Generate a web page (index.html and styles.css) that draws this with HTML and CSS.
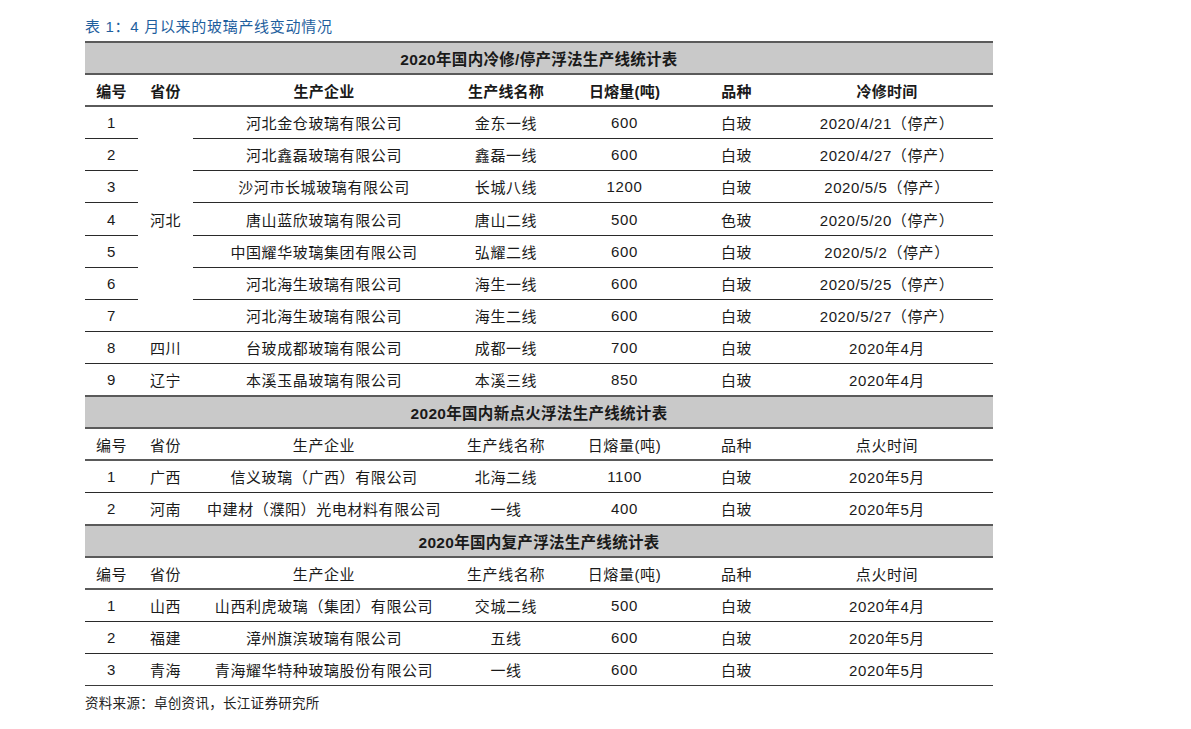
FILE: index.html
```html
<!DOCTYPE html>
<html lang="zh">
<head>
<meta charset="utf-8">
<link rel="stylesheet" href="styles.css">
</head>
<body>
<div class="wrap">
  <div class="title">表 1：4 月以来的玻璃产线变动情况</div>
  <table class="tbl">
    <colgroup>
      <col class="c1"><col class="c2"><col class="c3"><col class="c4"><col class="c5"><col class="c6"><col class="c7">
    </colgroup>
    <tbody>
      <tr class="band"><td colspan="7">2020年国内冷修/停产浮法生产线统计表</td></tr>
      <tr class="head bold"><td>编号</td><td>省份</td><td>生产企业</td><td>生产线名称</td><td>日熔量(吨)</td><td>品种</td><td>冷修时间</td></tr>
      <tr><td>1</td><td rowspan="7" class="merged">河北</td><td>河北金仓玻璃有限公司</td><td>金东一线</td><td>600</td><td>白玻</td><td>2020/4/21（停产）</td></tr>
      <tr><td>2</td><td>河北鑫磊玻璃有限公司</td><td>鑫磊一线</td><td>600</td><td>白玻</td><td>2020/4/27（停产）</td></tr>
      <tr><td>3</td><td>沙河市长城玻璃有限公司</td><td>长城八线</td><td>1200</td><td>白玻</td><td>2020/5/5（停产）</td></tr>
      <tr><td>4</td><td>唐山蓝欣玻璃有限公司</td><td>唐山二线</td><td>500</td><td>色玻</td><td>2020/5/20（停产）</td></tr>
      <tr><td>5</td><td>中国耀华玻璃集团有限公司</td><td>弘耀二线</td><td>600</td><td>白玻</td><td>2020/5/2（停产）</td></tr>
      <tr><td>6</td><td>河北海生玻璃有限公司</td><td>海生一线</td><td>600</td><td>白玻</td><td>2020/5/25（停产）</td></tr>
      <tr><td>7</td><td>河北海生玻璃有限公司</td><td>海生二线</td><td>600</td><td>白玻</td><td>2020/5/27（停产）</td></tr>
      <tr><td>8</td><td>四川</td><td>台玻成都玻璃有限公司</td><td>成都一线</td><td>700</td><td>白玻</td><td>2020年4月</td></tr>
      <tr><td>9</td><td>辽宁</td><td>本溪玉晶玻璃有限公司</td><td>本溪三线</td><td>850</td><td>白玻</td><td>2020年4月</td></tr>

      <tr class="band"><td colspan="7">2020年国内新点火浮法生产线统计表</td></tr>
      <tr class="head"><td>编号</td><td>省份</td><td>生产企业</td><td>生产线名称</td><td>日熔量(吨)</td><td>品种</td><td>点火时间</td></tr>
      <tr><td>1</td><td>广西</td><td>信义玻璃（广西）有限公司</td><td>北海二线</td><td>1100</td><td>白玻</td><td>2020年5月</td></tr>
      <tr><td>2</td><td>河南</td><td>中建材（濮阳）光电材料有限公司</td><td>一线</td><td>400</td><td>白玻</td><td>2020年5月</td></tr>

      <tr class="band"><td colspan="7">2020年国内复产浮法生产线统计表</td></tr>
      <tr class="head"><td>编号</td><td>省份</td><td>生产企业</td><td>生产线名称</td><td>日熔量(吨)</td><td>品种</td><td>点火时间</td></tr>
      <tr><td>1</td><td>山西</td><td>山西利虎玻璃（集团）有限公司</td><td>交城二线</td><td>500</td><td>白玻</td><td>2020年4月</td></tr>
      <tr><td>2</td><td>福建</td><td>漳州旗滨玻璃有限公司</td><td>五线</td><td>600</td><td>白玻</td><td>2020年5月</td></tr>
      <tr class="last"><td>3</td><td>青海</td><td>青海耀华特种玻璃股份有限公司</td><td>一线</td><td>600</td><td>白玻</td><td>2020年5月</td></tr>
    </tbody>
  </table>
  <div class="source">资料来源：卓创资讯，长江证券研究所</div>
</div>
</body>
</html>
```

FILE: styles.css
```css
html, body {
  margin: 0;
  padding: 0;
  background: #ffffff;
}
body {
  font-family: "Liberation Sans", "Noto Sans CJK SC", sans-serif;
  color: #1a1a1a;
}
.wrap {
  padding: 16px 0 0 85px;
  width: 908px;
}
.title {
  font-size: 15px;
  line-height: 21px;
  color: #1f5f9e;
  letter-spacing: 0.7px;
  height: 25px;
}
.tbl {
  border-collapse: collapse;
  width: 908px;
  table-layout: fixed;
  font-size: 15px;
}
.c1 { width: 53px; }
.c2 { width: 55px; }
.c3 { width: 262px; }
.c4 { width: 102px; }
.c5 { width: 135px; }
.c6 { width: 89px; }
.c7 { width: 212px; }
.tbl td {
  height: 32.2px;
  box-sizing: border-box;
  padding: 0;
  text-align: center;
  vertical-align: middle;
  border-bottom: 1px solid #2a2a2a;
  letter-spacing: 0.6px;
  white-space: nowrap;
}
.tbl tr.band td {
  background: #c9c9c9;
  font-weight: bold;
  font-size: 15.5px;
  border-top: 2px solid #5a5a5a;
  border-bottom: 2px solid #5a5a5a;
  letter-spacing: 0.3px;
}
.tbl tr.head.bold td {
  font-weight: bold;
  letter-spacing: 0.2px;
}
.tbl tr.head td {
  border-bottom: 2px solid #5a5a5a;
}
.tbl td.merged {
  border-bottom: 1px solid #2a2a2a;
}
.tbl tr.last td {
  border-bottom: 1.5px solid #3a3a3a;
}
.source {
  margin-top: 6px;
  font-size: 13.5px;
  color: #222;
  letter-spacing: 0.3px;
}
```
